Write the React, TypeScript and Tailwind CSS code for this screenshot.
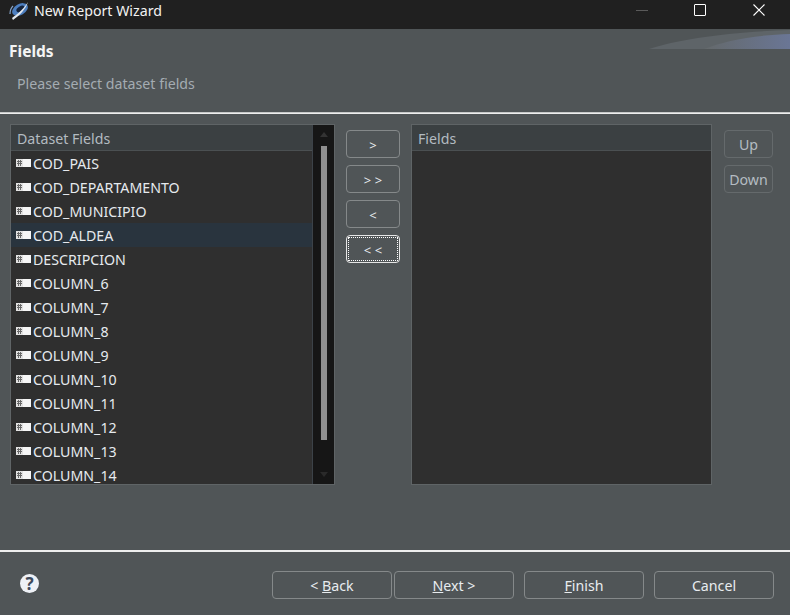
const datasetFields = [
  'COD_PAIS',
  'COD_DEPARTAMENTO',
  'COD_MUNICIPIO',
  'COD_ALDEA',
  'DESCRIPCION',
  'COLUMN_6',
  'COLUMN_7',
  'COLUMN_8',
  'COLUMN_9',
  'COLUMN_10',
  'COLUMN_11',
  'COLUMN_12',
  'COLUMN_13',
  'COLUMN_14',
]

function AppIcon() {
  return (
    <svg width="20" height="20" viewBox="0 0 20 20">
      <ellipse cx="11" cy="8.5" rx="8.5" ry="5.5" transform="rotate(-30 11 8.5)" fill="#4d7fc0" />
      <ellipse cx="11.5" cy="8" rx="4.5" ry="2.6" transform="rotate(-30 11.5 8)" fill="#14233c" />
      <path d="M3 17 C7 14 13 10 19 1 C17 8 10 15 4 19 Z" fill="#e4e9ef" />
      <path d="M1 13 C1 10 2 7 4 5" stroke="#86a3c8" strokeWidth="1.2" fill="none" />
    </svg>
  )
}

function FieldIcon() {
  return (
    <svg width="15" height="8" viewBox="0 0 15 8" className="shrink-0" shapeRendering="crispEdges">
      <rect width="15" height="8" fill="#f6f6f6" />
      <rect width="7" height="8" fill="#e2e2e2" />
      <path d="M2.5 1v6M4.5 1v6M1 2.5h5M1 4.5h5" stroke="#6a6a6a" strokeWidth="1" />
    </svg>
  )
}

function WizardButton({ children, focused, disabled, className }: { children: React.ReactNode; focused?: boolean; disabled?: boolean; className: string }) {
  const border = focused ? 'border-[#e6e6e6]' : disabled ? 'border-[#656a6c]' : 'border-[#85898a]'
  const color = disabled ? 'text-[#b4bcc2]' : 'text-[#e8ecef]'
  return (
    <div className={`flex h-[28px] items-center justify-center rounded-[4px] border p-[1px] ${border} ${color} ${className}`}>
      <div className={`flex h-full w-full items-center justify-center pt-[2px] ${focused ? 'outline-1 outline-dotted outline-white -outline-offset-1' : ''}`}>
        {children}
      </div>
    </div>
  )
}

function PaneHeader({ title }: { title: string }) {
  return (
    <div className="flex h-[26px] shrink-0 items-center border-b border-[#4b5052] bg-[#3b4042] pl-[6px] pt-[4px] text-[#b3bbc1]">
      {title}
    </div>
  )
}

export default function App() {
  return (
    <div className="flex h-[615px] w-[790px] flex-col overflow-hidden bg-[#505557] font-['Noto_Sans',sans-serif] text-[14.2px] leading-none">
      <div className="flex h-[29px] shrink-0 items-start bg-[#202020] pl-[9px] pt-[1px] text-[#f2f2f2]">
        <AppIcon />
        <span className="ml-[5px] mt-[3px]">New Report Wizard</span>
        <div className="ml-auto mt-[3px] flex items-center">
          <div className="mr-[46px] h-px w-[12px] bg-[#5a5a5a]" />
          <div className="mr-[47px] h-[12px] w-[12px] rounded-[1px] border-[1.5px] border-white" />
          <svg width="12" height="12" viewBox="0 0 12 12" className="mr-[25px]">
            <path d="M0.5 0.5 L11.5 11.5 M11.5 0.5 L0.5 11.5" stroke="#fff" strokeWidth="1.1" />
          </svg>
        </div>
      </div>

      <div className="relative h-[83px] shrink-0 pt-[15px]">
        <svg width="141" height="20" viewBox="0 0 141 20" className="absolute right-0 top-0">
          <defs>
            <linearGradient id="wave" x1="0" x2="1" y1="0" y2="0">
              <stop offset="0" stopColor="#64696b" />
              <stop offset="1" stopColor="#6a7695" />
            </linearGradient>
          </defs>
          <path d="M0 20 C30 10 80 3 141 1 V20 Z" fill="#5e6468" />
          <path d="M55 20 C75 12 105 6 141 5 V20 Z" fill="url(#wave)" />
        </svg>
        <div className="pl-[9px] text-[15.5px] font-bold text-[#f4f4f4]">Fields</div>
        <div className="mt-[17px] pl-[17px] text-[#a4acb2]">Please select dataset fields</div>
      </div>
      <div className="h-[2px] shrink-0 border-t border-[#c8caca] bg-white/90" />

      <div className="flex h-[436px] shrink-0 pl-[10px] pt-[10px]">
        <div className="flex h-[361px] w-[325px] flex-col border border-[#5f6466] bg-[#2f2f2f]">
          <div className="flex min-h-0 flex-1">
            <div className="flex min-w-0 flex-1 flex-col">
              <PaneHeader title="Dataset Fields" />
              <div className="min-h-0 flex-1 overflow-hidden">
                {datasetFields.map((field) => (
                  <div
                    key={field}
                    className={`flex h-[24px] items-center gap-[2px] pl-[5px] text-[#e6eaee] ${field === 'COD_ALDEA' ? 'bg-[#29343e]' : ''}`}
                  >
                    <FieldIcon />
                    <span className="pt-[2px]">{field}</span>
                  </div>
                ))}
              </div>
            </div>
            <div className="relative w-[22px] shrink-0 border-l border-[#3c4248] bg-[#161616]">
              <div className="absolute left-[7px] top-[7px] h-0 w-0 border-x-[4px] border-b-[5px] border-x-transparent border-b-[#333333]" />
              <div className="absolute left-[8px] top-[21px] h-[294px] w-[6px] bg-[#8f8f8f]" />
              <div className="absolute bottom-[7px] left-[7px] h-0 w-0 border-x-[4px] border-t-[5px] border-x-transparent border-t-[#2a2a2a]" />
            </div>
          </div>
        </div>

        <div className="ml-[11px] flex w-[54px] flex-col gap-[7px] pt-[6px] text-[13px]">
          <WizardButton className="w-full">&gt;</WizardButton>
          <WizardButton className="w-full">&gt;&nbsp;&gt;</WizardButton>
          <WizardButton className="w-full">&lt;</WizardButton>
          <WizardButton className="w-full" focused>&lt;&nbsp;&lt;</WizardButton>
        </div>

        <div className="ml-[11px] flex h-[361px] w-[301px] flex-col border border-[#5f6466] bg-[#2f2f2f]">
          <PaneHeader title="Fields" />
        </div>

        <div className="ml-[12px] flex w-[49px] flex-col gap-[7px] pt-[6px]">
          <WizardButton className="w-full" disabled>Up</WizardButton>
          <WizardButton className="w-full" disabled>Down</WizardButton>
        </div>
      </div>

      <div className="h-[2px] shrink-0 bg-[#eeeeee]" />

      <div className="flex flex-1 items-start pt-[19px]">
        <div className="ml-[20px] mt-[3px] flex h-[19px] w-[19px] items-center justify-center rounded-full bg-[#eef1f6] text-[17px] font-bold text-[#3e4a5c]">
          ?
        </div>
        <div className="ml-auto mr-[16px] flex">
          <WizardButton className="w-[120px]">&lt;&nbsp;<u>B</u>ack</WizardButton>
          <WizardButton className="ml-[2px] w-[120px]"><u>N</u>ext&nbsp;&gt;</WizardButton>
          <WizardButton className="ml-[10px] w-[120px]"><u>F</u>inish</WizardButton>
          <WizardButton className="ml-[10px] w-[120px]">Cancel</WizardButton>
        </div>
      </div>
    </div>
  )
}
